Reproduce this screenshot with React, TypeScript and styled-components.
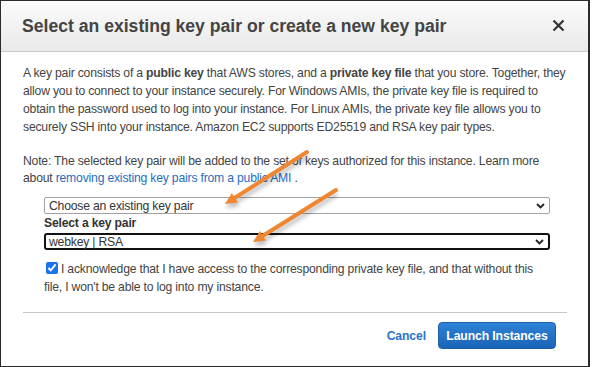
import React from "react";
import styled, { createGlobalStyle } from "styled-components";

const GlobalStyle = createGlobalStyle`
	html, body {
		margin: 0;
		padding: 0;
		background: #ffffff;
	}
	body {
		font-family: "Liberation Sans", Arial, sans-serif;
		color: #444;
	}
`;

const Dialog = styled.div`
	position: relative;
	width: 590px;
	height: 367px;
	box-sizing: border-box;
	border: 1px solid #2b2b2b;
	border-right-width: 2px;
	background: #fff;
	display: flex;
	flex-direction: column;
`;

const Header = styled.header`
	height: 51px;
	flex-shrink: 0;
	box-sizing: border-box;
	padding: 0 22px 0 21px;
	display: flex;
	align-items: center;
	justify-content: space-between;
	background: linear-gradient(#fbfbfb, #e9e9e9);
	border-bottom: 1px solid #c9c9c9;
`;

const Title = styled.h1`
	margin: 0;
	font-size: 17.6px;
	font-weight: bold;
	color: #444;
`;

const Close = styled.button`
	border: none;
	background: none;
	padding: 0;
	width: 14px;
	height: 14px;
	display: flex;
	cursor: pointer;
`;

const Body = styled.div`
	padding: 12px 22px 0 22px;
	font-size: 12.2px;
	letter-spacing: -0.2px;
	line-height: 18px;
	flex: 1;
	display: flex;
	flex-direction: column;
`;

const Para = styled.p`
	margin: 0;
	white-space: nowrap;
`;

const Note = styled.p`
	margin: 17px 0 0 0;
	line-height: 17px;
	white-space: nowrap;
`;

const Link = styled.a`
	color: #1f6dc2;
	text-decoration: none;
`;

const Fields = styled.div`
	margin: 10px 0 0 21px;
	width: 506px;
	display: flex;
	flex-direction: column;
`;

const SelectBox = styled.div<{ $focused?: boolean }>`
	height: 17px;
	box-sizing: border-box;
	display: flex;
	align-items: center;
	justify-content: space-between;
	padding: 0 4px 0 ${(p) => (p.$focused ? "3px" : "4px")};
	border: ${(p) => (p.$focused ? "2px solid #111" : "1px solid #a3a3a3")};
	border-radius: ${(p) => (p.$focused ? "3px" : "2px")};
	color: #333;
	background: #fff;
`;

const Label = styled.label`
	font-weight: bold;
	line-height: 19px;
	color: #333;
`;

const Ack = styled.label`
	margin: 10px 0 0 21px;
	line-height: 18px;
	white-space: nowrap;
`;

const Check = styled.input`
	width: 12px;
	height: 12px;
	margin: 0 3px 0 2px;
	vertical-align: -1px;
	accent-color: #1a73e8;
`;

const Divider = styled.hr`
	margin: 16px -1px 0 0;
	border: none;
	border-top: 1px solid #c6c6c6;
`;

const Footer = styled.footer`
	display: flex;
	justify-content: flex-end;
	align-items: center;
	gap: 12px;
	padding: 9px 10px 0 0;
`;

const TextButton = styled.button`
	border: none;
	background: none;
	padding: 0;
	font-family: inherit;
	font-size: 12.2px;
	letter-spacing: -0.1px;
	font-weight: bold;
	color: #2d73c8;
	cursor: pointer;
`;

const Primary = styled.button`
	height: 27px;
	width: 118px;
	padding: 0;
	white-space: nowrap;
	border: 1px solid #1b5eaa;
	border-radius: 4px;
	background: linear-gradient(#2e82d8, #1a64b6);
	color: #fff;
	font-family: inherit;
	font-size: 12.2px;
	letter-spacing: -0.1px;
	font-weight: bold;
	cursor: pointer;
`;

const Annotations = styled.svg`
	position: absolute;
	left: 0;
	top: 0;
	pointer-events: none;
`;

const Chevron = () => (
	<svg width="9" height="6" viewBox="0 0 9 6">
		<path d="M1 1 L4.5 4.5 L8 1" fill="none" stroke="#222" strokeWidth="1.8" />
	</svg>
);

const Arrow = ({ x1, y1, x2, y2 }: { x1: number; y1: number; x2: number; y2: number }) => {
	const a = Math.atan2(y2 - y1, x2 - x1);
	const len = 13;
	const w = 0.45;
	const p1 = [x2 - len * Math.cos(a - w), y2 - len * Math.sin(a - w)];
	const p2 = [x2 - len * Math.cos(a + w), y2 - len * Math.sin(a + w)];
	const shaft = [x2 - 8 * Math.cos(a), y2 - 8 * Math.sin(a)];
	return (
		<g>
			<g transform="translate(1 4)" opacity="0.25" filter="url(#blur)">
				<line x1={x1} y1={y1} x2={shaft[0]} y2={shaft[1]} stroke="#000" strokeWidth="4" />
				<polygon points={`${x2},${y2} ${p1[0]},${p1[1]} ${p2[0]},${p2[1]}`} fill="#000" />
			</g>
			<line x1={x1} y1={y1} x2={shaft[0]} y2={shaft[1]} stroke="#ee8632" strokeWidth="4" strokeLinecap="round" />
			<polygon points={`${x2},${y2} ${p1[0]},${p1[1]} ${p2[0]},${p2[1]}`} fill="#ee8632" />
		</g>
	);
};

const App = () => {
	return (
		<Dialog>
			<GlobalStyle />
			<Header>
				<Title>Select an existing key pair or create a new key pair</Title>
				<Close aria-label="Close">
					<svg width="13" height="13" viewBox="0 0 13 13">
						<path d="M1.5 1.5 L11.5 11.5 M11.5 1.5 L1.5 11.5" stroke="#333" strokeWidth="2.2" />
					</svg>
				</Close>
			</Header>
			<Body>
				<Para>
					A key pair consists of a <b>public key</b> that AWS stores, and a <b>private key file</b> that you store. Together, they
					<br />
					allow you to connect to your instance securely. For Windows AMIs, the private key file is required to
					<br />
					obtain the password used to log into your instance. For Linux AMIs, the private key file allows you to
					<br />
					securely SSH into your instance. Amazon EC2 supports ED25519 and RSA key pair types.
				</Para>
				<Note>
					Note: The selected key pair will be added to the set of keys authorized for this instance. Learn more
					<br />
					about <Link href="#">removing existing key pairs from a public AMI</Link> .
				</Note>
				<Fields>
					<SelectBox>
						<span>Choose an existing key pair</span>
						<Chevron />
					</SelectBox>
					<Label>Select a key pair</Label>
					<SelectBox $focused>
						<span>webkey | RSA</span>
						<Chevron />
					</SelectBox>
				</Fields>
				<Ack>
					<Check type="checkbox" defaultChecked />I acknowledge that I have access to the corresponding private key file, and that without this
					<br />
					file, I won't be able to log into my instance.
				</Ack>
				<Divider />
				<Footer>
					<TextButton>Cancel</TextButton>
					<Primary>Launch Instances</Primary>
				</Footer>
			</Body>
			<Annotations width="592" height="367">
				<defs>
					<filter id="blur" x="-20%" y="-20%" width="140%" height="140%">
						<feGaussianBlur stdDeviation="2" />
					</filter>
				</defs>
				<Arrow x1={306} y1={151} x2={224} y2={203} />
				<Arrow x1={335} y1={189} x2={252} y2={241} />
			</Annotations>
		</Dialog>
	);
};

export default App;
